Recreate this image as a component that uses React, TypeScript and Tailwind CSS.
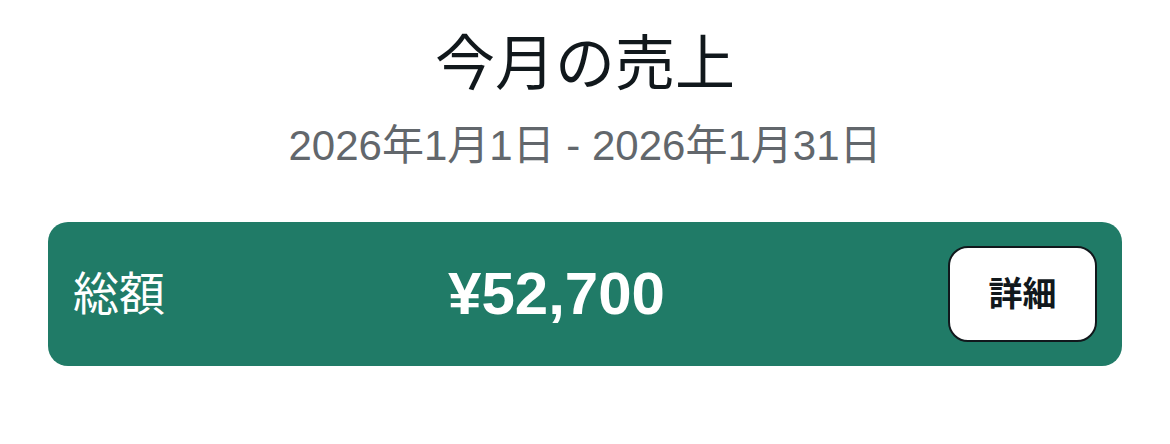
import React from "react";

export default function App() {
  return (
    <div
      className="w-[1170px] h-[444px] bg-white flex flex-col items-center pt-[29px]"
      style={{ fontFamily: '"Liberation Sans", "Noto Sans CJK JP", sans-serif' }}
    >
      <h1 className="text-[60px] leading-[72px] text-[#11181c] font-normal">今月の売上</h1>
      <p className="mt-[20px] text-[42px] leading-[50px] text-[#62676c]">
        2026年1月1日 - 2026年1月31日
      </p>

      <div className="mt-[51px] w-[1074px] h-[144px] bg-[#207b67] rounded-[20px] flex items-center justify-between px-[25px]">
        <span className="text-white text-[46px] leading-none">総額</span>
        <span className="text-white text-[60px] font-bold leading-none">¥52,700</span>
        <button className="w-[149px] h-[96px] bg-white border-2 border-[#11181c] rounded-[20px] flex items-center justify-center text-[34px] font-bold text-[#11181c]">
          詳細
        </button>
      </div>
    </div>
  );
}
